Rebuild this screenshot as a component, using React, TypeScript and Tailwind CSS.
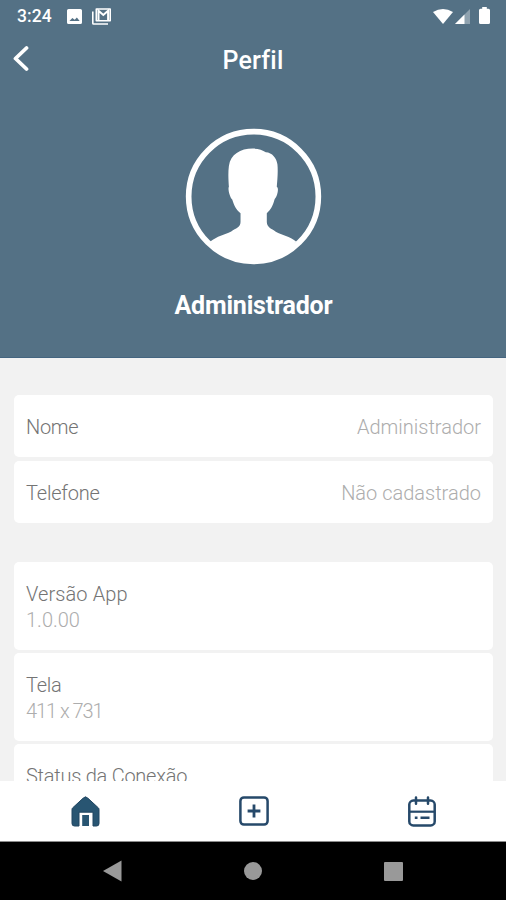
import React from 'react';

interface InfoRowProps {
  label: string;
  value?: string;
  labelClass?: string;
  valueClass?: string;
}

const InlineRow: React.FC<InfoRowProps> = ({ label, value, labelClass = '', valueClass = '' }) => (
  <div className="flex h-[62px] items-center justify-between rounded-[5px] bg-white px-3 pt-px">
    <span className={labelClass}>{label}</span>
    <span className={`text-[#adadad] ${valueClass}`}>{value}</span>
  </div>
);

const StackedRow: React.FC<InfoRowProps> = ({ label, value, labelClass = '', valueClass = '' }) => (
  <div className="flex h-[88px] shrink-0 flex-col items-start rounded-[5px] bg-white px-3 pt-[19px] leading-[26px]">
    <span className={labelClass}>{label}</span>
    {value && <span className={`text-[#adadad] ${valueClass}`}>{value}</span>}
  </div>
);

const StatusBar: React.FC = () => (
  <div className="flex h-8 items-center justify-between pl-[17px] pr-[15px] text-white">
    <div className="flex items-center">
      <span className="w-[50px] font-[Roboto] text-[17.5px] font-medium leading-8 tracking-[0.1px]">3:24</span>
      <svg className="h-[15px] w-[15px]" viewBox="0 0 14 14">
        <path fill="currentColor" fillRule="evenodd" d="M1.500 0h11Q14 0 14 1.500v11q0 1.500-1.500 1.500h-11Q0 14 0 12.500v-11Q0 0 1.500 0ZM2.300 11.300h9.500L9.200 8 7.200 10 5 8.300Z" />
      </svg>
      <svg className="ml-[10px] h-[17px] w-[19px]" viewBox="0 0 19 17">
        <path fill="none" stroke="currentColor" strokeWidth="1.600" d="M.8 3.500v11.700q0 .8.800.8H16" />
        <path fill="none" stroke="currentColor" strokeWidth="1.600" strokeLinejoin="round" d="M4.300 1h13.900v11.700H4.300Z" />
        <path fill="none" stroke="currentColor" strokeWidth="2" d="M6.500 12V2.800l4.800 4.200 4.800-4.200V12" />
      </svg>
    </div>
    <div className="flex items-center">
      <svg className="h-[15px] w-5" viewBox="0 0 20 15">
        <path fill="currentColor" d="M0 3Q10-3 20 3L10 15Z" />
      </svg>
      <svg className="ml-[2px] h-[15px] w-[15px]" viewBox="0 0 15 15">
        <path fill="currentColor" opacity=".35" d="M15 0v15H0Z" />
        <path fill="currentColor" d="M9.500 5.500V15H0Z" />
      </svg>
      <svg className="-mt-[2px] ml-[9px] mr-px h-[17px] w-[11px]" viewBox="0 0 11 17">
        <path fill="currentColor" d="M3.200 0h4.600v1.800H9.500Q11 1.800 11 3.300v12.200Q11 17 9.500 17h-8Q0 17 0 15.500V3.300Q0 1.800 1.500 1.800h1.700Z" />
      </svg>
    </div>
  </div>
);

const Avatar: React.FC = () => (
  <svg className="h-[137px] w-[137px]" viewBox="0 0 412 412">
    <circle cx="206" cy="206" r="195" fill="none" stroke="#fff" strokeWidth="17" />
    <path
      fill="#fff"
      d="M204 62C220 62 234 66 243 73C262 74 276 91 278 110C280 130 278 155 276 177C281 180 280 190 277 200C275 209 270 211 269 216C264 235 258 246 246 256V283C246 299 260 303 273 312C292 323 315 326 334 341Q282 407 206 407Q127 407 76 341C97 325 118 321 139 311C153 302 167 299 167 283V256C155 247 148 235 142 215C135 210 128 183 132 177C131 160 129 138 132 114C137 80 166 62 204 62Z"
    />
  </svg>
);

const TabBar: React.FC = () => (
  <nav className="flex h-[60px] shrink-0 items-center bg-white text-[#26496a]">
    <div className="flex flex-1 justify-center pl-[2px]">
      <svg className="h-[31px] w-[29px]" viewBox="0 0 29 31">
        <path
          fill="#285572"
          stroke="#214662"
          strokeWidth="1"
          strokeLinejoin="round"
          d="M14.500.8 17 2.300 27.500 12Q28 12.500 28 14v13.500Q28 30 25.500 30H22V16.200H8V30H3.500Q1 30 1 27.500V14q0-1.500.5-2L12 2.300Z"
        />
        <path fill="#285572" d="M11.200 19h6.800v11h-6.800Z" />
      </svg>
    </div>
    <div className="flex flex-1 justify-center pl-px">
      <svg className="h-[30px] w-[30px]" viewBox="0 0 30 30" fill="none" stroke="currentColor">
        <rect x="1.400" y="1.400" width="27.200" height="27.200" rx="3.500" strokeWidth="2.500" />
        <path strokeWidth="2.800" d="M8.600 15h12.800M15 8.600v12.800" />
      </svg>
    </div>
    <div className="flex flex-1 justify-center pl-px">
      <svg className="h-[31px] w-7" viewBox="0 0 28 31" fill="none" stroke="currentColor">
        <rect x="1.300" y="4.600" width="25.400" height="24.800" rx="4" strokeWidth="2.500" />
        <path strokeWidth="2.500" strokeLinecap="round" d="M8 1.500v6.300M20 1.500v6.300" />
        <path strokeWidth="2.200" d="M1.500 15.700h25" />
        <path strokeWidth="2.600" d="M6.800 21.800h2.700M12.500 21.800h9" />
      </svg>
    </div>
  </nav>
);

const SystemBar: React.FC = () => (
  <div className="flex h-[59px] shrink-0 items-center justify-between border-t border-[#8c8c8c] bg-black px-[103px]">
    <svg className="h-[22px] w-[19px]" viewBox="0 0 19 22">
      <path fill="#999" d="M0 11 18.500.5v21Z" />
    </svg>
    <div className="h-[18px] w-[18px] rounded-full bg-[#999]" />
    <div className="h-[19px] w-[19px] rounded-[1px] bg-[#999]" />
  </div>
);

export default function App() {
  return (
    <div className="flex h-[900px] w-[506px] flex-col overflow-hidden bg-[#f2f2f2] font-[Roboto,sans-serif]">
      <header className="flex h-[358px] shrink-0 flex-col border-b border-[#446580] bg-[#547185] text-white">
        <StatusBar />
        <div className="grid h-[58px] grid-cols-3 items-center">
          <svg className="mb-[5px] ml-[13px] h-[27px] w-4" viewBox="0 0 16 27" fill="none" stroke="currentColor">
            <path strokeWidth="3.800" strokeLinecap="round" strokeLinejoin="round" d="M13.500 3 2.500 13.500 13.500 24" />
          </svg>
          <h1 className="text-center text-[25px] font-medium tracking-[0.2px]">Perfil</h1>
          <span />
        </div>
        <div className="mt-[38px] flex flex-col items-center">
          <Avatar />
          <h2 className="mt-[22px] pl-px text-[25px] font-bold leading-[38px] tracking-[-0.2px]">Administrador</h2>
        </div>
      </header>

      <main className="flex min-h-0 flex-1 flex-col overflow-hidden pl-[14px] pr-[13px] pt-[37px] text-xl font-light text-[#747474]">
        <section className="flex flex-col gap-1">
          <InlineRow label="Nome" value="Administrador" labelClass="tracking-[-0.3px]" />
          <InlineRow label="Telefone" value="Não cadastrado" labelClass="tracking-[-0.2px]" />
        </section>
        <section className="mt-[39px] flex flex-col gap-[3px]">
          <StackedRow label="Versão App" value="1.0.00" labelClass="tracking-[0.1px]" />
          <StackedRow label="Tela" value="411 x 731" labelClass="tracking-[-0.3px]" valueClass="tracking-[-1.05px]" />
          <StackedRow label="Status da Conexão" labelClass="tracking-[-0.25px]" />
        </section>
      </main>

      <TabBar />
      <SystemBar />
    </div>
  );
}
